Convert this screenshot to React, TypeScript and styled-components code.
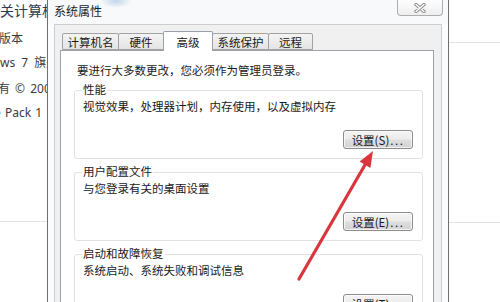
import React from "react";
import styled, { createGlobalStyle } from "styled-components";

const CJK = `"Noto Sans CJK SC", "Noto Sans", sans-serif`;
const UI = `"Noto Sans", "Noto Sans CJK SC", sans-serif`;

const Global = createGlobalStyle`
  html, body { margin: 0; padding: 0; background: #fff; }
  body { width: 500px; height: 302px; overflow: hidden; }
  * { box-sizing: border-box; }
`;

const Page = styled.div`
  position: relative;
  width: 500px;
  height: 302px;
  overflow: hidden;
  display: flex;
  background: #fff;
  font-family: ${CJK};
`;

const Backdrop = styled.div<{ $w: number }>`
  flex: 0 0 ${(p) => p.$w}px;
  overflow: hidden;
  display: flex;
  flex-direction: column;
  background: #fff;
  white-space: nowrap;
`;

const BgHeading = styled.div`
  font-size: 14px;
  line-height: 20px;
  color: #2c3b55;
  margin-left: -14px;
`;

const BgText = styled.div<{ $top: number; $indent?: number; $spacing?: number }>`
  font-family: ${UI};
  font-size: 12px;
  line-height: 16px;
  color: #3c3c3c;
  word-spacing: ${(p) => p.$spacing ?? 1}px;
  margin-top: ${(p) => p.$top}px;
  margin-left: ${(p) => p.$indent ?? 0}px;
`;

const BgRule = styled.div<{ $top: number }>`
  flex: none;
  height: 1px;
  background: #e3e3e3;
  margin-top: ${(p) => p.$top}px;
`;

const Window = styled.div`
  flex: 0 0 402px;
  display: flex;
  flex-direction: column;
  border-left: 1px solid #6f6f6f;
  border-right: 1px solid #6f6f6f;
  background: #fbfcfd;
`;

const TitleBar = styled.div`
  flex: none;
  height: 24px;
  display: flex;
  align-items: flex-start;
  padding: 0 5px 0 6px;
  background: radial-gradient(ellipse 16px 7px at 68px 1px, rgba(150, 185, 225, 0.55), rgba(150, 185, 225, 0)),
    #f8f9fb;
`;

const Title = styled.div`
  font-size: 12px;
  line-height: 16px;
  margin-top: 3px;
  color: #1e1e1e;
`;

const CloseButton = styled.div`
  margin-left: auto;
  width: 46px;
  height: 16px;
  border: 1px solid #adadad;
  border-top: none;
  border-radius: 0 0 4px 4px;
  background: linear-gradient(#fefefe, #eeeeee);
  display: flex;
  align-items: center;
  justify-content: center;
`;

const Body = styled.div`
  flex: 1;
  margin: 0 6px;
  border: 1px solid #cdcdcd;
  border-bottom: none;
  background: #f0f0f0;
  padding: 6px 7px 0 5px;
  display: flex;
  flex-direction: column;
  min-height: 0;
`;

const TabStrip = styled.div`
  flex: none;
  height: 19px;
  display: flex;
  align-items: flex-end;
  padding-left: 2px;
  position: relative;
  z-index: 1;
`;

const Tab = styled.div<{ $w: number; $active?: boolean }>`
  width: ${(p) => p.$w}px;
  height: ${(p) => (p.$active ? 20 : 17)}px;
  margin-right: -1px;
  margin-bottom: ${(p) => (p.$active ? -1 : 0)}px;
  padding-top: ${(p) => (p.$active ? 1 : 0)}px;
  border: 1px solid ${(p) => (p.$active ? "#9aa0a8" : "#a2a2a2")};
  border-bottom: ${(p) => (p.$active ? "none" : "1px solid #a2a2a2")};
  border-radius: 2px 2px 0 0;
  background: ${(p) => (p.$active ? "#ffffff" : "linear-gradient(#f4f4f4, #e4e4e4)")};
  display: flex;
  align-items: center;
  justify-content: center;
  font-size: 11.5px;
  line-height: 14px;
  color: #1a1a1a;
  position: relative;
  z-index: ${(p) => (p.$active ? 2 : 1)};
`;

const Panel = styled.div`
  flex: 1;
  min-height: 0;
  overflow: hidden;
  background: #fff;
  border: 1px solid #9da1a8;
  border-bottom: none;
  padding: 12px 10px 0 13px;
  display: flex;
  flex-direction: column;
`;

const Intro = styled.div`
  margin-left: 3px;
  font-size: 11.5px;
  line-height: 14px;
  color: #1a1a1a;
  white-space: nowrap;
`;

const Groups = styled.div`
  margin-top: 13px;
  display: flex;
  flex-direction: column;
  gap: 13px;
`;

const GroupBox = styled.section`
  flex: none;
  border: 1px solid #e2e2e2;
  border-radius: 3px;
  padding: 0 9px 9px 8px;
  display: flex;
  flex-direction: column;
`;

const GroupTitle = styled.div`
  align-self: flex-start;
  margin: -9px 0 0 -1px;
  padding: 0 1px;
  background: #fff;
  font-size: 11.5px;
  line-height: 14px;
  color: #1a1a1a;
`;

const GroupDesc = styled.div`
  margin-top: 3px;
  font-size: 11.5px;
  line-height: 14px;
  color: #1a1a1a;
  white-space: nowrap;
`;

const Button = styled.div`
  align-self: flex-end;
  margin-top: 17px;
  width: 70px;
  height: 19px;
  border: 1px solid #8c8c8c;
  border-radius: 3px;
  background: linear-gradient(#f4f4f4 0%, #ececec 48%, #dedede 52%, #d2d2d2 100%);
  box-shadow: inset 0 0 0 1px rgba(255, 255, 255, 0.7);
  display: flex;
  align-items: center;
  justify-content: center;
  font-size: 11.5px;
  line-height: 14px;
  color: #1a1a1a;
  white-space: nowrap;
`;

const Dots = styled.span`
  letter-spacing: 1.5px;
  margin-left: 1px;
`;

const Overlay = styled.svg`
  position: absolute;
  left: 0;
  top: 0;
  pointer-events: none;
`;

const tabs = [
  { label: "计算机名", w: 57 },
  { label: "硬件", w: 46 },
  { label: "高级", w: 50, active: true },
  { label: "系统保护", w: 57 },
  { label: "远程", w: 45 },
];

const groups = [
  { title: "性能", desc: "视觉效果，处理器计划，内存使用，以及虚拟内存", key: "S" },
  { title: "用户配置文件", desc: "与您登录有关的桌面设置", key: "E" },
  { title: "启动和故障恢复", desc: "系统启动、系统失败和调试信息", key: "T" },
];

export default function App() {
  return (
    <Page>
      <Global />
      <Backdrop $w={47}>
        <BgHeading>有关计算机</BgHeading>
        <BgText $top={11} $indent={-1}>版本</BgText>
        <BgText $top={8} $spacing={3}>ws 7 旗舰版</BgText>
        <BgText $top={10} $indent={-2} $spacing={2}>有 © 2009</BgText>
        <BgText $top={8} $indent={-6} $spacing={1}>e Pack 1</BgText>
        <BgRule $top={100} />
      </Backdrop>

      <Window>
        <TitleBar>
          <Title>系统属性</Title>
          <CloseButton>
            <svg width="12" height="10" viewBox="0 0 12 10">
              <path d="M2 1.5 L10 8.5 M10 1.5 L2 8.5" stroke="#8e8e8e" strokeWidth="3.4" strokeLinecap="round" />
              <path d="M2 1.5 L10 8.5 M10 1.5 L2 8.5" stroke="#ffffff" strokeWidth="1.4" strokeLinecap="round" />
            </svg>
          </CloseButton>
        </TitleBar>
        <Body>
          <TabStrip>
            {tabs.map((t) => (
              <Tab key={t.label} $w={t.w} $active={t.active}>
                {t.label}
              </Tab>
            ))}
          </TabStrip>
          <Panel>
            <Intro>要进行大多数更改，您必须作为管理员登录。</Intro>
            <Groups>
              {groups.map((g) => (
                <GroupBox key={g.title}>
                  <GroupTitle>{g.title}</GroupTitle>
                  <GroupDesc>{g.desc}</GroupDesc>
                  <Button>
                    设置({g.key})<Dots>...</Dots>
                  </Button>
                </GroupBox>
              ))}
            </Groups>
          </Panel>
        </Body>
      </Window>

      <Backdrop $w={51}>
        <BgRule $top={42} />
        <BgRule $top={179} />
      </Backdrop>

      <Overlay width="500" height="302" viewBox="0 0 500 302">
        <line x1="299" y1="279" x2="365.5" y2="164" stroke="#d9363e" strokeWidth="3.2" strokeLinecap="round" />
        <polygon points="373,151 370.4,168 359.6,161.6" fill="#d9363e" />
      </Overlay>
    </Page>
  );
}
